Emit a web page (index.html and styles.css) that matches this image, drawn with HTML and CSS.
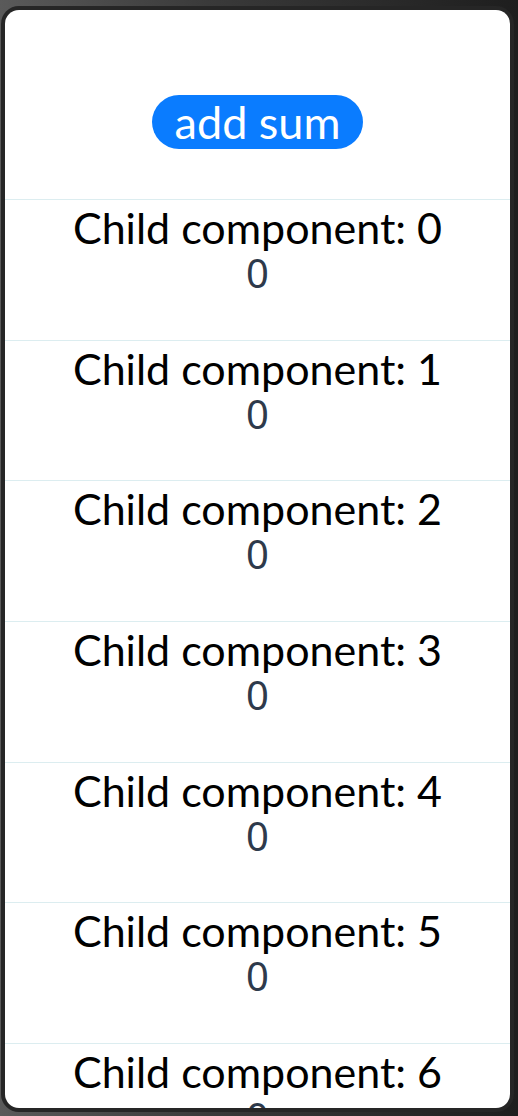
FILE: index.html
```html
<!DOCTYPE html>
<html>
<head>
<meta charset="utf-8">
<link rel="stylesheet" href="styles.css">
</head>
<body>
<div class="screen">
  <div class="header">
    <button class="add-btn">add sum</button>
  </div>
  <div class="list">
    <div class="row"><div class="title">Child component: 0</div><div class="value">0</div></div>
    <div class="row"><div class="title">Child component: 1</div><div class="value">0</div></div>
    <div class="row"><div class="title">Child component: 2</div><div class="value">0</div></div>
    <div class="row"><div class="title">Child component: 3</div><div class="value">0</div></div>
    <div class="row"><div class="title">Child component: 4</div><div class="value">0</div></div>
    <div class="row"><div class="title">Child component: 5</div><div class="value">0</div></div>
    <div class="row"><div class="title">Child component: 6</div><div class="value">0</div></div>
  </div>
</div>
</body>
</html>
```

FILE: styles.css
```css
html, body {
  margin: 0;
  padding: 0;
}
body {
  width: 518px;
  height: 1116px;
  overflow: hidden;
  background: linear-gradient(90deg, #5a5a5a 0%, #3a3a3a 40%, #1e1e1e 100%);
  font-family: Lato, "Noto Sans", sans-serif;
}
.screen {
  margin: 10px 8px 0 5px;
  height: 1098px;
  background: #ffffff;
  border-radius: 14px;
  overflow: hidden;
  box-shadow: 0 0 0 4px #262626;
}
.header {
  height: 189px;
  display: flex;
  justify-content: center;
  align-items: flex-start;
  padding-top: 85px;
  box-sizing: border-box;
}
.add-btn {
  width: 211px;
  height: 54px;
  border: none;
  border-radius: 27px;
  background: #0a7cff;
  color: #ffffff;
  font-family: Lato, "Noto Sans", sans-serif;
  font-size: 45px;
  line-height: 54px;
  padding: 0 0 2px 0;
}
.row {
  height: 139.67px;
  border-top: 1px solid #dcedf0;
  display: flex;
  flex-direction: column;
  align-items: center;
}
.title {
  font-size: 43px;
  line-height: 46px;
  color: #000000;
  margin-top: 5px;
}
.value {
  font-family: "Noto Sans", Lato, sans-serif;
  font-size: 40px;
  line-height: 40px;
  margin-top: 2px;
  color: #2e3a4b;
}
```
